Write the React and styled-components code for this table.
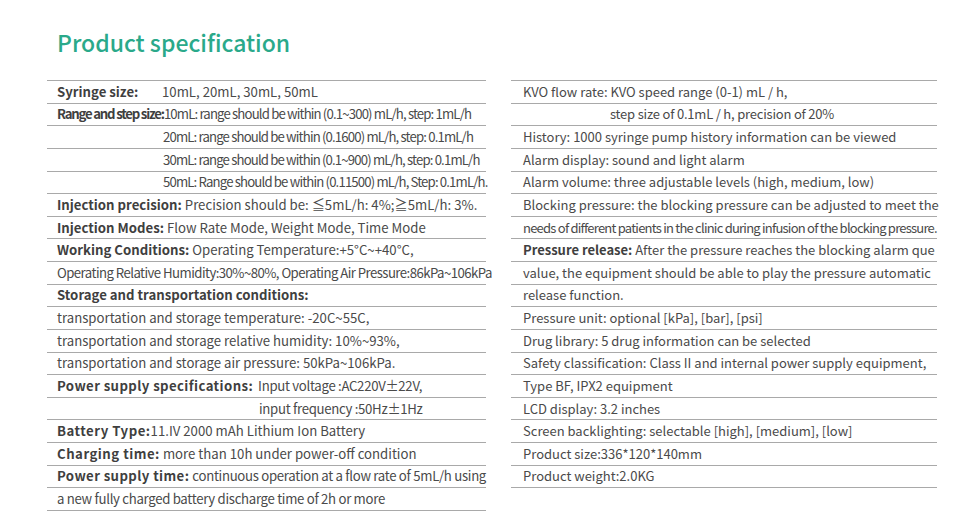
import React from "react";
import styled, { createGlobalStyle } from "styled-components";

const GlobalStyle = createGlobalStyle`
  html, body {
    margin: 0;
    padding: 0;
    background: #ffffff;
  }
  body {
    font-family: "Noto Sans CJK SC", "Noto Sans", sans-serif;
    color: #444444;
  }
`;

const Page = styled.div`
  width: 960px;
  height: 523px;
  padding: 0 0 0 47px;
  box-sizing: border-box;
  overflow: hidden;
`;

const Title = styled.h1`
  margin: 0;
  padding: 28px 0 0 10px;
  height: 53px;
  box-sizing: border-box;
  font-size: 23px;
  font-weight: 500;
  line-height: 28px;
  color: #2aa98a;
`;

const Columns = styled.div`
  display: grid;
  grid-template-columns: 439px 426px;
  column-gap: 25px;
  margin-top: 27px;
`;

const Column = styled.div`
  border-top: 1px solid #a9a9a9;
  font-size: ${props => props.$size}px;
`;

const Row = styled.div`
  display: flex;
  align-items: center;
  height: 22.63px;
  box-sizing: border-box;
  border-bottom: 1px solid #a9a9a9;
  padding-left: ${props => props.$pad}px;
  line-height: 20px;
  white-space: nowrap;
`;

const Label = styled.span`
  flex-shrink: 0;
  font-weight: 700;
  color: #3f3f3f;
  min-width: ${props => props.$width || 0}px;
  margin-right: ${props => props.$gap ?? 3}px;
  letter-spacing: ${props => props.$spacing || 0}px;
`;

const Value = styled.span`
  flex-shrink: 0;
  color: #4a4a4a;
  letter-spacing: ${props => props.$spacing || 0}px;
`;

const left = [
  { label: "Syringe size:", labelWidth: 105, gap: 0, value: "10mL, 20mL, 30mL, 50mL" },
  {
    label: "Range and step size:",
    labelSpacing: -1.2,
    gap: 0,
    value: "10mL: range should be within (0.1~300) mL/h, step: 1mL/h",
    valueSpacing: -0.85
  },
  { indent: 106, value: "20mL: range should be within (0.1600) mL/h, step: 0.1mL/h", valueSpacing: -0.85 },
  { indent: 106, value: "30mL: range should be within (0.1~900) mL/h, step: 0.1mL/h", valueSpacing: -0.85 },
  { indent: 106, value: "50mL: Range should be within (0.11500) mL/h, Step: 0.1mL/h.", valueSpacing: -0.85 },
  { label: "Injection precision:", value: "Precision should be: ≦5mL/h: 4%;≧5mL/h: 3%." },
  { label: "Injection Modes:", value: "Flow Rate Mode, Weight Mode, Time Mode" },
  { label: "Working Conditions:", value: "Operating Temperature:+5°C~+40°C," },
  {
    value: "Operating Relative Humidity:30%~80%, Operating Air Pressure:86kPa~106kPa",
    valueSpacing: -0.55
  },
  { label: "Storage and transportation conditions:" },
  { value: "transportation and storage temperature: -20C~55C," },
  { value: "transportation and storage relative humidity: 10%~93%," },
  { value: "transportation and storage air pressure: 50kPa~106kPa." },
  {
    label: "Power supply specifications:",
    labelSpacing: 0.4,
    gap: 5,
    value: "Input voltage :AC220V±22V,",
    valueSpacing: -0.3
  },
  { indent: 202, value: "input frequency :50Hz±1Hz", valueSpacing: -0.3 },
  { label: "Battery Type:", labelSpacing: 0.5, gap: 0, value: "11.IV 2000 mAh Lithium Ion Battery" },
  { label: "Charging time:", labelSpacing: 0.5, value: "more than 10h under power-off condition" },
  {
    label: "Power supply time:",
    labelSpacing: 0.4,
    value: "continuous operation at a flow rate of 5mL/h using",
    valueSpacing: -0.3
  },
  { value: "a new fully charged battery discharge time of 2h or more", valueSpacing: -0.3 }
];

const right = [
  { value: "KVO flow rate: KVO speed range (0-1) mL / h," },
  { indent: 87, value: "step size of 0.1mL / h, precision of 20%", valueSpacing: -0.2 },
  { value: "History: 1000 syringe pump history information can be viewed" },
  { value: "Alarm display: sound and light alarm" },
  { value: "Alarm volume: three adjustable levels (high, medium, low)" },
  { value: "Blocking pressure: the blocking pressure can be adjusted to meet the" },
  {
    value: "needs of different patients in the clinic during infusion of the blocking pressure.",
    valueSpacing: -0.77
  },
  { label: "Pressure release:", value: "After the pressure reaches the blocking alarm que" },
  { value: "value, the equipment should be able to play the pressure automatic" },
  { value: "release function." },
  { value: "Pressure unit: optional [kPa], [bar], [psi]" },
  { value: "Drug library: 5 drug information can be selected" },
  { value: "Safety classification: Class II and internal power supply equipment," },
  { value: "Type BF, IPX2 equipment" },
  { value: "LCD display: 3.2 inches" },
  { value: "Screen backlighting: selectable [high], [medium], [low]" },
  { value: "Product size:336*120*140mm" },
  { value: "Product weight:2.0KG" }
];

const SpecColumn = ({ rows, pad, size }) => (
  <Column $size={size}>
    {rows.map((row, i) => (
      <Row key={i} $pad={pad + (row.indent || 0)}>
        {row.label && (
          <Label $width={row.labelWidth} $spacing={row.labelSpacing} $gap={row.gap}>
            {row.label}
          </Label>
        )}
        {row.value && <Value $spacing={row.valueSpacing}>{row.value}</Value>}
      </Row>
    ))}
  </Column>
);

const App = () => (
  <Page>
    <GlobalStyle />
    <Title>Product specification</Title>
    <Columns>
      <SpecColumn rows={left} pad={10} size={13.2} />
      <SpecColumn rows={right} pad={12} size={13} />
    </Columns>
  </Page>
);

export default App;
